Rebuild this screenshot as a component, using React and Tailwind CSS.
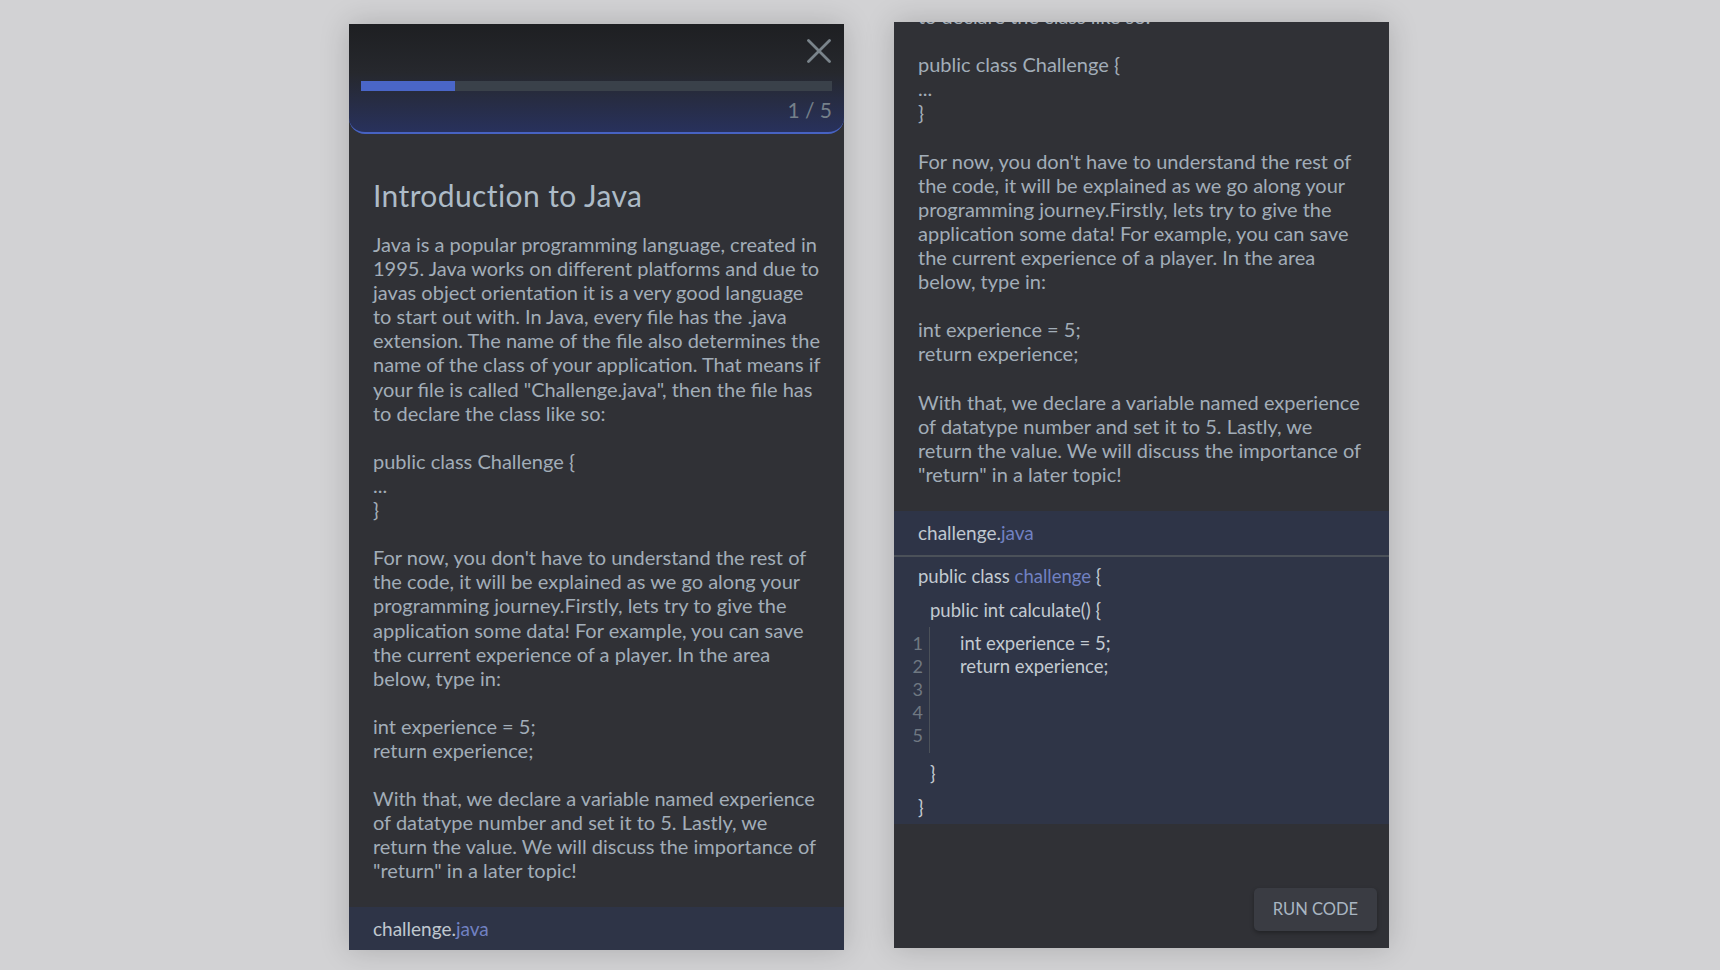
import React from 'react';

const introLines = [
    'Java is a popular programming language, created in',
    '1995. Java works on different platforms and due to',
    'javas object orientation it is a very good language',
    'to start out with. In Java, every file has the .java',
    'extension. The name of the file also determines the',
    'name of the class of your application. That means if',
    'your file is called "Challenge.java", then the file has',
];

const restLines = [
    'to declare the class like so:',
    '',
    'public class Challenge {',
    '...',
    '}',
    '',
    "For now, you don't have to understand the rest of",
    'the code, it will be explained as we go along your',
    'programming journey.Firstly, lets try to give the',
    'application some data! For example, you can save',
    'the current experience of a player. In the area',
    'below, type in:',
    '',
    'int experience = 5;',
    'return experience;',
    '',
    'With that, we declare a variable named experience',
    'of datatype number and set it to 5. Lastly, we',
    'return the value. We will discuss the importance of',
    '"return" in a later topic!',
];

const LessonText = ({ lines }) => (
    <div className="text-[20px] leading-[24.1px] text-[#a2adb8] whitespace-nowrap">
        {lines.map((line, i) =>
            line ? <p key={i}>{line}</p> : <div key={i} className="h-[24.1px]" />
        )}
    </div>
);

const FileTab = ({ className = '' }) => (
    <div className={`bg-[#2e3447] px-6 flex items-center text-[19px] ${className}`}>
        <span className="text-[#c0c8d0]">challenge.</span>
        <span className="text-[#7181c2]">java</span>
    </div>
);

const App = () => {
    const progress = 20;

    return (
        <div className="w-full min-h-screen h-[970px] bg-[#d2d2d4] font-['Lato','Noto_Sans',sans-serif] overflow-hidden">
            <div className="flex items-start gap-[50px] pl-[349px] pt-[22px]">
                {/* Lesson panel */}
                <div className="mt-[2px] w-[495px] h-[926px] bg-[#303136] flex flex-col shadow-[0_0_28px_rgba(0,0,0,0.18)]">
                    <div className="h-[110px] shrink-0 rounded-b-[16px] border-b-2 border-[#4762c2] bg-[linear-gradient(to_bottom,#1e1f22_0%,#26282d_45%,#28315c_100%)] px-3 flex flex-col">
                        <div className="flex justify-end pt-[15px] pr-px">
                            <svg width="24" height="24" viewBox="0 0 24 24" fill="none" stroke="#7a848b" strokeWidth="2.8" strokeLinecap="round">
                                <line x1="1.5" y1="1.5" x2="22.5" y2="22.5" />
                                <line x1="22.5" y1="1.5" x2="1.5" y2="22.5" />
                            </svg>
                        </div>
                        <div className="mt-[18px] h-[10px] bg-[#3a414a]">
                            <div className="h-full bg-[#4a66c8]" style={{ width: `${progress}%` }} />
                        </div>
                        <p className="mt-[5px] text-right text-[21px] leading-[28px] text-[#75808a]">1 / 5</p>
                    </div>

                    <div className="flex-1 overflow-hidden px-6">
                        <h1 className="mt-[43px] text-[30px] leading-[36px] tracking-[0.4px] text-[#adbbc7]">Introduction to Java</h1>
                        <div className="mt-[19px]">
                            <LessonText lines={[...introLines, ...restLines]} />
                        </div>
                    </div>

                    <FileTab className="h-[43px] shrink-0 pt-[2px]" />
                </div>

                {/* Editor panel */}
                <div className="w-[495px] h-[926px] bg-[#303136] flex flex-col overflow-hidden shadow-[0_0_28px_rgba(0,0,0,0.18)]">
                    <div className="px-6 -mt-[18px] pb-[25px]">
                        <LessonText lines={restLines} />
                    </div>

                    <FileTab className="h-[46px] shrink-0 border-b-2 border-[#4b5159]" />

                    <div className="bg-[#2f3547] pt-[2px] text-[18.5px] text-[#c3cad1]">
                        <p className="pl-6 h-[34px] leading-[34px]">
                            public class <span className="text-[#7181c2]">challenge</span> {'{'}
                        </p>
                        <p className="pl-9 h-[34px] leading-[34px]">public int calculate() {'{'}</p>
                        <div className="flex h-[126px] mb-[3px]">
                            <div className="w-[36px] pr-[6px] border-r border-[#4b5159] text-right text-[#6f7882] text-[18px] leading-[23px] py-[5px]">
                                {[1, 2, 3, 4, 5].map((n) => (
                                    <div key={n}>{n}</div>
                                ))}
                            </div>
                            <div className="pl-[30px] leading-[23px] py-[5px]">
                                <div>int experience = 5;</div>
                                <div>return experience;</div>
                            </div>
                        </div>
                        <p className="pl-9 h-[34px] leading-[34px]">{'}'}</p>
                        <p className="pl-6 h-[34px] leading-[34px]">{'}'}</p>
                    </div>

                    <div className="flex-1 flex items-end justify-end pr-3 pb-[17px]">
                        <button className="w-[123px] h-[43px] rounded-[5px] bg-[#3a3c43] text-[16.5px] text-[#a9b6c2] shadow-[0_2px_4px_rgba(0,0,0,0.3)]">
                            RUN CODE
                        </button>
                    </div>
                </div>
            </div>
        </div>
    );
};

export default App;
